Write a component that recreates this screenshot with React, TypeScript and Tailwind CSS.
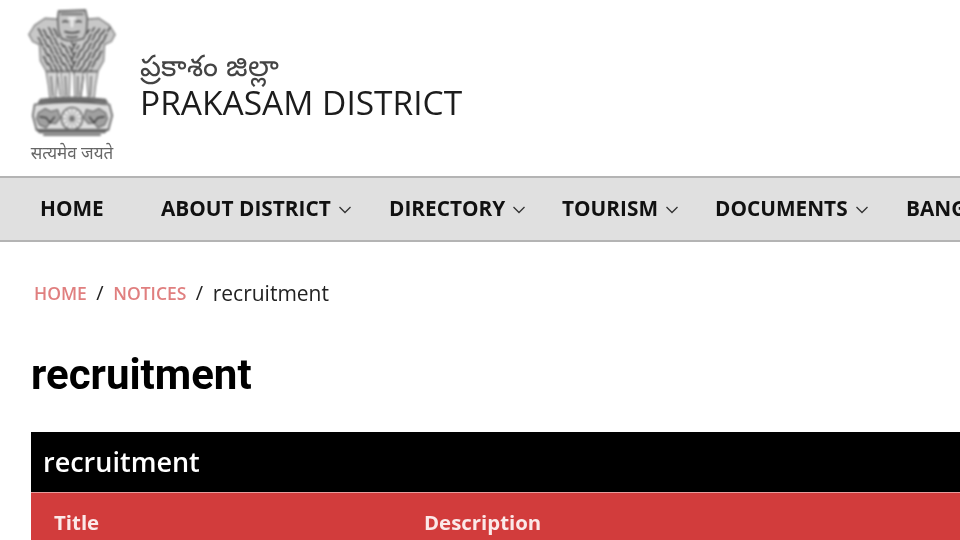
import React from "react";

const os = "font-['Open_Sans','Noto_Sans',sans-serif]";

function Chevron() {
  return (
    <svg width="14" height="8" viewBox="0 0 14 8" fill="none" stroke="#333" strokeWidth="1.3" className="mt-0.5 shrink-0">
      <path d="M1.5 1l5.5 5.5L12.5 1" />
    </svg>
  );
}

function Emblem() {
  const mane: string[] = [];
  for (let row = 0; row < 10; row++) {
    for (let c = 0; c < 16; c++) {
      const x = 7 + c * 5.4 + (row % 2) * 2.2;
      const y = 22 + row * 4.4 + ((c * 7) % 3);
      if (Math.abs(x - 48) > 40 - row * 1.6) continue;
      if (y < 36 && Math.abs(x - 48) < 17) continue;
      const dir = x < 48 ? 1 : -1;
      mane.push(`M${x} ${y}q${dir * 2} 2 ${dir * 3} 4.5`);
    }
  }
  const spokes: string[] = [];
  for (let i = 0; i < 12; i++) {
    const a = (i * Math.PI) / 6;
    spokes.push(`M${48 + 3 * Math.cos(a)} ${112 + 3 * Math.sin(a)}L${48 + 10 * Math.cos(a)} ${112 + 10 * Math.sin(a)}`);
  }
  return (
    <svg width="92" height="137" viewBox="0 0 96 135" preserveAspectRatio="none" fill="none" stroke="#777" strokeWidth="1" className="blur-[0.8px]">
      {/* side lions */}
      <path d="M34 14L20 13 9 20 3 29l4 7 7 3 1 16 6 10h54l6-10 1-16 7-3 4-7-6-9-11-7-14 1" fill="#c8c8c8" stroke="#808080" strokeWidth="1.4" />
      {/* mane hatching */}
      {mane.map((d, i) => (
        <path key={i} d={d} stroke="#484848" strokeWidth="1.5" />
      ))}
      {/* central lion head */}
      <path d="M34 6l28-1 2 8-1 14-3 6-8 2h-9l-6-2-3-7-1-13z" fill="#c4c4c4" stroke="#5e5e5e" strokeWidth="1.6" />
      <path d="M36 9h24" stroke="#777" strokeWidth="2" />
      <path d="M44 13h8M48 13v9" stroke="#f0f0f0" strokeWidth="2.4" />
      <path d="M38 17q3-2 6 0M52 17q3-2 6 0M40 26q8 3 16 0M42 31q6 2 12 0" stroke="#505050" strokeWidth="1.7" />
      {/* legs */}
      <path d="M21 66q3 14 4 27h6l2-27zM36 66l3 27h6l1-27zM50 66l1 27h6l3-27zM63 66l2 27h6q1-13 4-27z" fill="#d6d6d6" stroke="#777" strokeWidth="1.2" />
      <path d="M26 70l2 20M41 70l1 20M54 70v20M68 70l-1 20M33 70l3 20M60 70l-3 20" stroke="#777" strokeWidth="1.6" />
      {/* abacus */}
      <path d="M15 93q33-4 68 0l2 3q-37-3-72 0z" fill="#6f6f6f" stroke="#666" />
      <path d="M9 98q39-5 78 0l3 11-4 14H11L7 109z" fill="#dcdcdc" stroke="#5c5c5c" strokeWidth="1.6" />
      <path d="M13 106l7-4 6 3 7-2 3 8-5 6-6-1-4 5-7-3-3-6zM83 106l-7-4-6 3-7-2-3 8 5 6 6-1 4 5 7-3 3-6z" fill="#a0a0a0" stroke="#5c5c5c" />
      <path d="M14 110l7 1 4 5 5-6M82 110l-7 1-4 5-5-6" stroke="#3e3e3e" strokeWidth="1.5" />
      <path d="M11 123h74l-3 3H14z" fill="#707070" stroke="#5e5e5e" />
      <path d="M18 128h60" stroke="#5e5e5e" strokeWidth="1.8" />
      {/* chakra */}
      <circle cx="48" cy="112" r="11" fill="#e8e8e8" stroke="#6e6e6e" strokeWidth="1.6" />
      {spokes.map((d, i) => (
        <path key={i} d={d} stroke="#999" strokeWidth="1" />
      ))}
      <circle cx="48" cy="112" r="2.8" fill="#777" stroke="none" />
    </svg>
  );
}

export default function App() {
  const items = [
    ["HOME", false, "w-[121px]"],
    ["ABOUT DISTRICT", true, "w-[228px]"],
    ["DIRECTORY", true, "w-[173px]"],
    ["TOURISM", true, "w-[153px]"],
    ["DOCUMENTS", true, "w-[191px]"],
    ["BANGALORE", false, "w-[150px]"],
  ] as const;
  return (
    <div className={`w-[960px] h-[540px] overflow-hidden bg-white blur-[0.4px] ${os}`}>
      <header className="h-[176px] flex items-start pl-[24px] pt-[5px]">
        <div className="flex flex-col items-center w-[96px]">
          <Emblem />
          <span className="text-[17px] leading-[20px] text-[#666] font-['Noto_Sans','DejaVu_Sans',sans-serif] mt-[1px] whitespace-nowrap">
            सत्यमेव जयते
          </span>
        </div>
        <div className="ml-[20px] pt-[43px] text-[#1c1c1c]">
          <div className="text-[29.5px] leading-[34px] font-light text-[#444]">ప్రకాశం జిల్లా</div>
          <div className="text-[33.5px] leading-[40px] whitespace-nowrap">PRAKASAM DISTRICT</div>
        </div>
      </header>

      <nav className="h-[66px] w-[1100px] bg-[#e0e0e0] border-y-2 border-[#b4b4b4] flex items-center pl-[40px] text-[20.8px] font-bold text-[#111]">
        {items.map(([label, chev, w]) => (
          <div key={label} className={`${w} shrink-0 flex items-center gap-[7px] whitespace-nowrap`}>
            <span>{label}</span>
            {chev && <Chevron />}
          </div>
        ))}
      </nav>

      <div className="pl-[34px] pt-[37px] h-[64px] box-content flex items-start gap-[9.5px] text-[21px] leading-[28px]">
        <span className="text-[#e07f7f] text-[17.5px] font-semibold">HOME</span>
        <span className="text-[#222] text-[20px]">/</span>
        <span className="text-[#e07f7f] text-[17.5px] font-semibold">NOTICES</span>
        <span className="text-[#222] text-[20px]">/</span>
        <span className="text-[#222]">recruitment</span>
      </div>

      <h1 className="pl-[31px] mt-[8px] text-[42px] leading-[48px] font-bold text-black font-['Roboto',sans-serif]">recruitment</h1>

      <section className="ml-[31px] mt-[33px] w-[1000px]">
        <div className="h-[60px] bg-black text-white text-[27px] font-semibold flex items-center pl-[12px]">recruitment</div>
        <div className="h-[60px] bg-[#d23c3c] border-t border-[#e89b9b] text-[#fbe9e9] text-[20.4px] font-bold flex items-start pt-[14px] pl-[23px]">
          <div className="w-[370px]">Title</div>
          <div>Description</div>
        </div>
      </section>
    </div>
  );
}
